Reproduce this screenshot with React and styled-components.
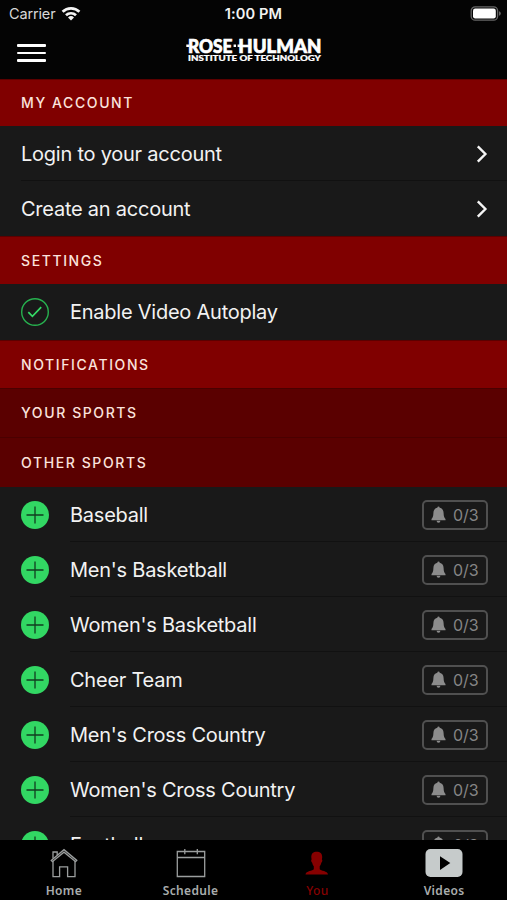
import React from "react";
import styled, { createGlobalStyle } from "styled-components";

const sports = [
  "Baseball",
  "Men's Basketball",
  "Women's Basketball",
  "Cheer Team",
  "Men's Cross Country",
  "Women's Cross Country",
  "Football",
];

const GlobalStyle = createGlobalStyle`
  body {
    margin: 0;
    background-color: #000;
  }
  * {
    box-sizing: border-box;
  }
`;

const Screen = styled.div`
  display: flex;
  flex-direction: column;
  height: 900px;
  overflow: hidden;
  background-color: #191919;
  color: #f2f2f2;
  font-family: Inter, "Liberation Sans", sans-serif;
`;

const StatusBar = styled.div`
  display: grid;
  grid-template-columns: 1fr auto 1fr;
  align-items: center;
  flex: none;
  height: 27px;
  padding: 0 6px;
  background-color: #040404;
`;

const Carrier = styled.div`
  display: flex;
  align-items: center;
  gap: 6px;
  padding-left: 3px;
  font-size: 14.5px;
  letter-spacing: -0.15px;
  color: #d8d8d8;
`;

const Clock = styled.div`
  font-size: 14.6px;
  font-weight: 600;
  letter-spacing: 0.1px;
  color: #f2f2f2;
`;

const Battery = styled.svg`
  justify-self: end;
`;

const NavBar = styled.div`
  display: grid;
  grid-template-columns: 1fr 140px 1fr;
  align-items: center;
  flex: none;
  height: 52px;
  padding: 0 16px 0 17px;
  background-color: #040404;
`;

const MenuButton = styled.button`
  display: flex;
  flex-direction: column;
  gap: 5px;
  width: 29px;
  padding: 0;
  border: 0;
  background: none;
  > span {
    height: 2.4px;
    border-radius: 1px;
    background-color: #fff;
  }
`;

const Logo = styled.svg`
  display: block;
  margin-top: -6px;
  overflow: visible;
`;

const Content = styled.div`
  flex: 1;
  min-height: 0;
  overflow: hidden;
`;

const SectionHeader = styled.div`
  display: flex;
  align-items: center;
  height: ${props => props.$height}px;
  padding: 0 0 1px 21px;
  border-top: 1px solid ${props => (props.$dark ? "#4a0000" : "#5c0000")};
  background-color: ${props => (props.$dark ? "#5a0000" : "#800000")};
  color: #fbe3dd;
  font-size: 14px;
  font-weight: 500;
  letter-spacing: 1.6px;
`;

const Row = styled.div`
  display: flex;
  align-items: center;
  height: ${props => props.$height || 55}px;
  padding: 0 19px 0 21px;
`;

const Divider = styled.div`
  height: 1px;
  margin: -1px 0 0 ${props => props.$inset}px;
  background-color: #111;
`;

const RowLabel = styled.div`
  flex: 1;
  font-size: 20px;
  letter-spacing: -0.24px;
`;

const RowIcon = styled.svg`
  flex: none;
  margin-right: 21px;
`;

const Badge = styled.div`
  display: flex;
  align-items: center;
  gap: 7px;
  width: 66px;
  height: 30px;
  padding: 0 0 0 7px;
  border: 2px solid #505050;
  border-radius: 5px;
  color: #858585;
  font-size: 16px;
  letter-spacing: -0.1px;
`;

const TabBar = styled.div`
  display: grid;
  grid-template-columns: repeat(4, 1fr);
  flex: none;
  height: 60px;
  background-color: #000;
`;

const Tab = styled.div`
  display: flex;
  flex-direction: column;
  align-items: center;
  padding: 6px 0 0 1px;
  color: ${props => (props.$active ? "#860000" : "#a9adad")};
  font-family: "Noto Sans", "Open Sans", sans-serif;
  font-size: 12px;
  font-weight: ${props => (props.$active ? 500 : 600)};
  line-height: 16px;
  letter-spacing: 0.35px;
  > svg {
    display: block;
    margin-bottom: 5px;
  }
`;

const WifiIcon = () => (
  <svg width="20" height="15" viewBox="0 0 20 15" fill="none" stroke="#f4f4f4" strokeWidth="2.7">
    <path d="M1.6 5.8a12 12 0 0 1 16.8 0" />
    <path d="M5 9.3a7.1 7.1 0 0 1 10 0" />
    <path d="M10 14.4L7 11.5a4.4 4.4 0 0 1 6 0Z" fill="#f4f4f4" stroke="none" />
  </svg>
);

const BatteryIcon = () => (
  <Battery width="31" height="15" viewBox="0 0 31 15">
    <rect x="1.2" y="0.8" width="26.4" height="13.4" rx="4" fill="#080808" stroke="#666" strokeWidth="1.3" />
    <rect x="3" y="2.6" width="22.8" height="9.8" rx="2.2" fill="#fff" />
    <path d="M29 5.2q1.8 .6 1.8 2.3t-1.8 2.3Z" fill="#666" />
  </Battery>
);

const RoseLogo = () => (
  <Logo width="140" height="28" viewBox="0 0 140 28" fill="#fff" fontFamily="Lato, sans-serif" fontWeight="900">
    <text x="4" y="16.6" fontSize="18.6" textLength="44.5" lengthAdjust="spacingAndGlyphs" stroke="#fff" strokeWidth="0.7">ROSE</text>
    <path d="M2.3 8.5h3v2.4h-3ZM49.6 8.5h2.4v2.4h-2.4ZM53.6 8.5h3v2.4h-3Z" />
    <text x="54.3" y="16.6" fontSize="18.6" textLength="83.2" lengthAdjust="spacingAndGlyphs" stroke="#fff" strokeWidth="0.7">HULMAN</text>
    <text x="4" y="24.5" fontSize="7" textLength="133" lengthAdjust="spacingAndGlyphs" stroke="#fff" strokeWidth="0.2">INSTITUTE OF TECHNOLOGY</text>
  </Logo>
);

const Chevron = () => (
  <svg width="14" height="20" viewBox="0 0 14 20" fill="none" stroke="#f5f5f5" strokeWidth="2.4">
    <path d="M3.8 2.4L11.4 10L3.8 17.6" />
  </svg>
);

const CheckIcon = () => (
  <RowIcon width="28" height="28" viewBox="0 0 28 28" fill="none" stroke="#27b14f" strokeWidth="1.4">
    <circle cx="14" cy="14" r="13.3" />
    <path d="M7.3 14.2l4.1 4.2L20.2 9.2" stroke="#35d965" strokeWidth="1.7" />
  </RowIcon>
);

const PlusIcon = () => (
  <RowIcon width="28" height="28" viewBox="0 0 28 28">
    <circle cx="14" cy="14" r="14" fill="#32d763" />
    <path d="M5.5 14h17M14 5.5v17" stroke="#123d20" strokeWidth="1.3" />
  </RowIcon>
);

const BellIcon = () => (
  <svg width="15" height="18" viewBox="0 0 15 18" fill="#8c8c8c">
    <path d="M7.5 .5q1 0 1.2 1.2c2.6.6 3.8 2.6 3.9 5.2.1 3.3.7 5 1.9 6v1.4H.5v-1.4c1.2-1 1.8-2.7 1.9-6 .1-2.6 1.3-4.6 3.9-5.2Q6.5.5 7.5.5Z" />
    <path d="M5.6 14.8h3.8a1.9 1.9 0 0 1-3.8 0Z" />
  </svg>
);

const HomeIcon = () => (
  <svg width="30" height="32" viewBox="0 0 30 32" fill="none" stroke="#9b9e9e" strokeWidth="1.3">
    <path d="M2.2 14.4L15 3.7l12.8 10.7-1.2 1.3L15 6.2 3.4 15.7Z" />
    <path d="M4 12.6V6h4.2v3.2M4 14.8v15.8h6.6V20.8h8v9.8h7.4V14.8" />
  </svg>
);

const CalendarIcon = () => (
  <svg width="30" height="32" viewBox="0 0 30 32" fill="none" stroke="#9b9e9e" strokeWidth="1.3">
    <path d="M1.3 5.5h27.4v25H1.3ZM1.3 11.5h27.4M8.8 3v5.2M21.3 3v5.2" />
  </svg>
);

const PersonIcon = () => (
  <svg width="30" height="32" viewBox="0 0 30 32" fill="#860000">
    <path d="M14.7 5.8c3.4 0 5.5 1.8 5.5 5.4l-.3 2.4c.8.3.4 2.6-.6 3.2-.3 1.6-.8 2.6-1.6 3.4v3c.9 1.8 8 1.400 8.300 5.300H3.500c.3-3.900 7.400-3.500 8.300-5.300v-3c-.8-.8-1.300-1.800-1.600-3.400-1-.6-1.400-2.900-.6-3.200l-.3-2.400c0-3.600 2-5.400 5.400-5.400Z" />
  </svg>
);

const VideoIcon = () => (
  <svg width="38" height="32" viewBox="0 0 38 32">
    <rect x="0.5" y="3" width="37" height="28" rx="5" fill="#c6cbcb" />
    <path d="M15 10.2L25.3 17L15 24Z" fill="#000" />
  </svg>
);

const tabs = [
  { name: "Home", icon: <HomeIcon /> },
  { name: "Schedule", icon: <CalendarIcon /> },
  { name: "You", icon: <PersonIcon />, active: true },
  { name: "Videos", icon: <VideoIcon /> },
];

const SportRow = ({ name }) => (
  <>
    <Row>
      <PlusIcon />
      <RowLabel>{name}</RowLabel>
      <Badge>
        <BellIcon />
        0/3
      </Badge>
    </Row>
    <Divider $inset={70} />
  </>
);

const App = () => (
  <Screen>
    <GlobalStyle />
    <StatusBar>
      <Carrier>
        Carrier
        <WifiIcon />
      </Carrier>
      <Clock>1:00 PM</Clock>
      <BatteryIcon />
    </StatusBar>
    <NavBar>
      <MenuButton aria-label="Menu">
        <span />
        <span />
        <span />
      </MenuButton>
      <RoseLogo />
    </NavBar>
    <Content>
      <SectionHeader $height={47}>MY ACCOUNT</SectionHeader>
      <Row>
        <RowLabel>Login to your account</RowLabel>
        <Chevron />
      </Row>
      <Divider $inset={21} />
      <Row>
        <RowLabel>Create an account</RowLabel>
        <Chevron />
      </Row>
      <SectionHeader $height={48}>SETTINGS</SectionHeader>
      <Row $height={56}>
        <CheckIcon />
        <RowLabel>Enable Video Autoplay</RowLabel>
      </Row>
      <SectionHeader $height={48}>NOTIFICATIONS</SectionHeader>
      <SectionHeader $height={49} $dark>YOUR SPORTS</SectionHeader>
      <SectionHeader $height={50} $dark>OTHER SPORTS</SectionHeader>
      {sports.map(name => (
        <SportRow name={name} key={name} />
      ))}
    </Content>
    <TabBar>
      {tabs.map(tab => (
        <Tab $active={tab.active} key={tab.name}>
          {tab.icon}
          {tab.name}
        </Tab>
      ))}
    </TabBar>
  </Screen>
);

export default App;
